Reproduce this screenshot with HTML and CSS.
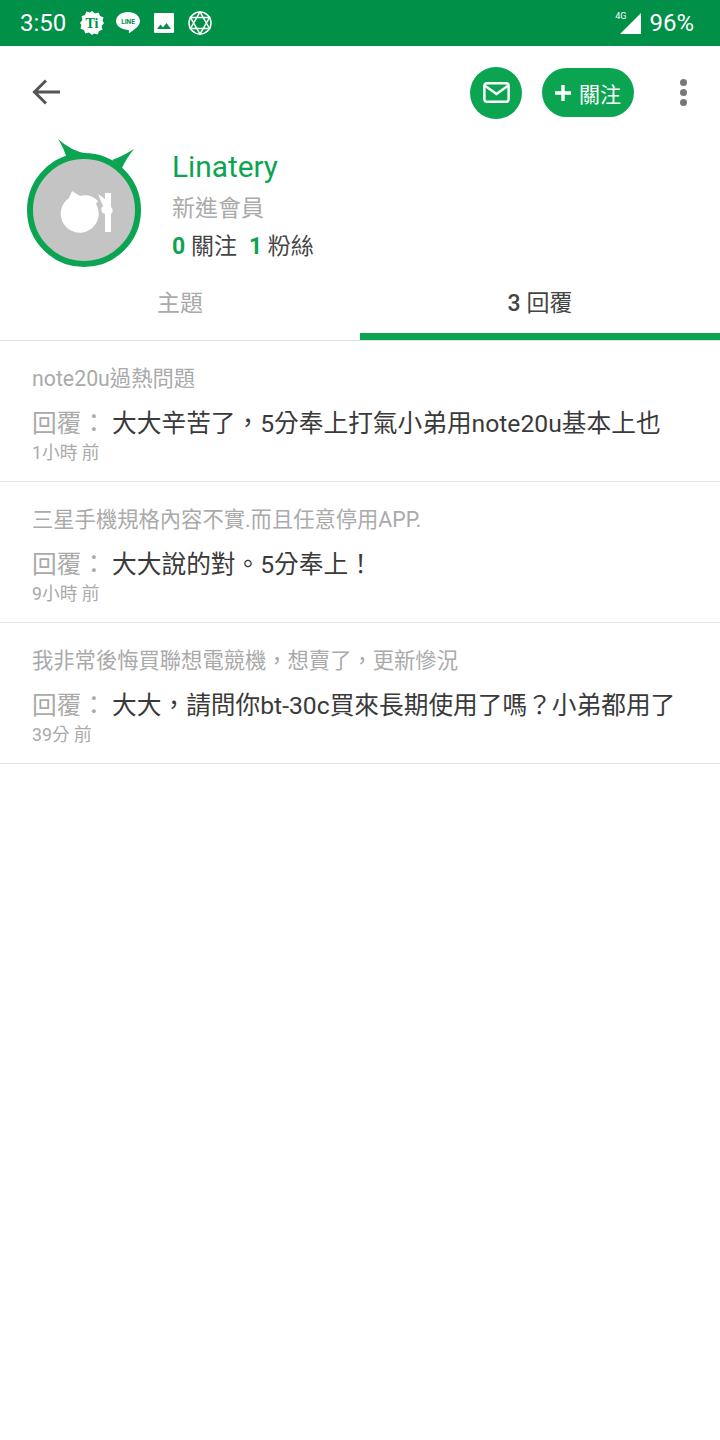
FILE: index.html
```html
<!DOCTYPE html>
<html lang="zh-Hant">
<head>
  <meta charset="UTF-8">
  <title>Linatery</title>
  <link rel="stylesheet" href="styles.css">
</head>
<body>
<div class="status-bar">
  <span class="clock">3:50</span>
  <svg class="st-icon" viewBox="0 0 26 26" width="26" height="26"><path fill="#fff" d="M13 1l3 2.400 3.700-.9 1.300 3.500 3.500 1.300-.9 3.700L25 13l-2.400 3 .9 3.700-3.500 1.300-1.300 3.500-3.700-.9L13 25l-3-2.400-3.700.9L5 20 1.500 18.700l.9-3.700L1 13l2.400-3-.9-3.700L6 5l1.300-3.500 3.700.9z"/><text x="13" y="18" class="ti">Ti</text></svg>
  <svg class="st-icon" viewBox="0 0 26 26" width="26" height="26"><path fill="#fff" d="M13 2c6.600 0 12 3.900 12 9 0 5-5.500 8.300-9.500 11.300-1 .7-1.700 1.200-1.700.2l.1-2.500C7.500 20 1 16.500 1 11c0-5.100 5.400-9 12-9z"/><text x="13" y="14" class="line">LINE</text></svg>
  <svg class="st-icon" viewBox="-3 -3 26 26" width="26" height="26"><path fill="#fff" d="M1 0h18a1 1 0 0 1 1 1v18a1 1 0 0 1-1 1H1a1 1 0 0 1-1-1V1a1 1 0 0 1 1-1zm2 16h14l-4.500-6-3.500 4.500-2.500-3z" fill-rule="evenodd"/></svg>
  <svg class="st-icon" viewBox="0 0 26 26" width="26" height="26"><g fill="none" stroke="#fff" stroke-width="1.500"><circle cx="13" cy="13" r="11"/><path d="M13 2l9.500 16.500h-19zM13 24L3.500 7.500h19z"/></g></svg>
  <span class="st-spacer"></span>
  <span class="net">4G</span>
  <svg class="signal" viewBox="0 0 21 21" width="21" height="21"><path fill="#fff" d="M21 0v21H0z"/></svg>
  <span class="battery">96%</span>
</div>

<div class="toolbar">
  <svg class="back" viewBox="0 0 28 26" width="28" height="26"><path fill="none" stroke="#555" stroke-width="3" d="M28 13H3M14 1.500L2.500 13 14 24.500"/></svg>
  <span class="tb-spacer"></span>
  <span class="mail-btn">
    <svg viewBox="0 0 28 22" width="27" height="21"><g fill="none" stroke="#fff" stroke-width="2.600"><rect x="1.300" y="1.300" width="25.400" height="19.400" rx="2.500"/><path d="M2 4l12 8.500L26 4"/></g></svg>
  </span>
  <span class="follow-btn">
    <svg class="plus" viewBox="0 0 16 16" width="16" height="16"><path fill="none" stroke="#fff" stroke-width="3.400" d="M8 0v16M0 8h16"/></svg>
    關注
  </span>
  <span class="more"><i></i><i></i><i></i></span>
</div>

<div class="profile">
  <svg class="avatar" viewBox="0 0 116 130" width="116" height="130">
    <path fill="#0ba552" d="M31 0q13 12 30 15L40 21q-2-10-9-21zM107 10q-13 8-22 11l10 8q4-9 12-19z"/>
    <circle cx="57" cy="71" r="54" fill="#c4c4c4" stroke="#0ba552" stroke-width="6"/>
    <g transform="translate(2 0)">
      <path fill="#fff" d="M43 52l8 5a19 19 0 0 1 18 5l-2 3a19 19 0 1 1-27-6z"/>
      <path fill="#fff" d="M69 55l7 5v-6h6v10 4a4.500 4.500 0 0 1 0 7v18h-6V75a4.500 4.500 0 0 1-2-8z"/>
    </g>
  </svg>
  <div class="info">
    <div class="name">Linatery</div>
    <div class="rank">新進會員</div>
    <div class="counts"><b>0</b> 關注<b class="second">1</b> 粉絲</div>
  </div>
</div>

<div class="tabs">
  <div class="tab">主題</div>
  <div class="tab active"><span class="num">3</span> 回覆</div>
</div>

<div class="list">
  <div class="item">
    <div class="title">note20u過熱問題</div>
    <div class="reply"><span class="lead">回覆：</span>大大辛苦了，5分奉上打氣小弟用note20u基本上也</div>
    <div class="time">1小時 前</div>
  </div>
  <div class="item">
    <div class="title">三星手機規格內容不實.而且任意停用APP.</div>
    <div class="reply"><span class="lead">回覆：</span>大大說的對。5分奉上！</div>
    <div class="time">9小時 前</div>
  </div>
  <div class="item">
    <div class="title">我非常後悔買聯想電競機，想賣了，更新慘況</div>
    <div class="reply"><span class="lead">回覆：</span>大大，請問你bt-30c買來長期使用了嗎？小弟都用了</div>
    <div class="time">39分 前</div>
  </div>
</div>
</body>
</html>
```

FILE: styles.css
```css
* {
  box-sizing: border-box;
}
body {
  margin: 0;
  background: #fff;
  font-family: Roboto, "Noto Sans CJK TC", sans-serif;
  color: #333;
}

.status-bar {
  display: flex;
  align-items: center;
  height: 46px;
  padding: 0 26px 0 20px;
  background: #009048;
  color: #fff;
}
.clock {
  font-size: 24px;
  margin-right: 13px;
}
.st-icon {
  margin-right: 10px;
}
.ti {
  font-family: "Liberation Serif", serif;
  font-weight: bold;
  font-size: 14px;
  text-anchor: middle;
  fill: #009048;
}
.line {
  font-size: 6.5px;
  font-weight: bold;
  text-anchor: middle;
  fill: #009048;
}
.st-spacer {
  flex: 1;
}
.net {
  font-size: 9px;
  align-self: flex-start;
  margin-top: 11px;
  margin-right: -6px;
}
.signal {
  margin-right: 8px;
}
.battery {
  font-size: 24px;
}

.toolbar {
  display: flex;
  align-items: center;
  height: 93px;
  padding: 0 33px 0 32px;
}
.back {
  margin-bottom: 2px;
}
.tb-spacer {
  flex: 1;
}
.mail-btn {
  display: flex;
  align-items: center;
  justify-content: center;
  width: 52px;
  height: 52px;
  border-radius: 50%;
  background: #0ba552;
  margin-right: 20px;
}
.follow-btn {
  display: flex;
  align-items: center;
  height: 49px;
  width: 92px;
  padding-left: 13px;
  border-radius: 25px;
  background: #0ba552;
  color: #fff;
  font-size: 21px;
  margin-right: 46px;
}
.plus {
  margin-right: 8px;
}
.more {
  display: flex;
  flex-direction: column;
  gap: 3px;
}
.more i {
  width: 7px;
  height: 7px;
  border-radius: 50%;
  background: #777;
}

.profile {
  display: flex;
  height: 136px;
}
.avatar {
  margin: 0 0 0 27px;
  flex: none;
}
.info {
  margin-left: 29px;
  padding-top: 7px;
}
.name {
  color: #0ba552;
  font-size: 29.800px;
  line-height: 42px;
}
.rank {
  color: #aaa;
  font-size: 23px;
  line-height: 42px;
}
.counts {
  font-size: 23px;
  line-height: 34px;
  color: #444;
}
.counts b {
  color: #0ba552;
  font-weight: bold;
}
.second {
  margin-left: 12px;
}

.tabs {
  display: flex;
  height: 66px;
  border-bottom: 1px solid #ddd;
}
.tab {
  flex: 1;
  text-align: center;
  font-size: 23px;
  line-height: 58px;
  color: #aaa;
}
.tab.active {
  color: #444;
  border-bottom: 7px solid #0ba552;
}
.num {
  font-weight: 500;
}

.item {
  height: 141px;
  padding: 22px 32px 0;
  border-bottom: 1px solid #e4e4e4;
}
.title {
  color: #aaa;
  font-size: 21.300px;
  line-height: 32px;
}
.reply {
  margin-top: 11px;
  font-size: 24.700px;
  line-height: 36px;
  color: #3a3a3a;
  white-space: nowrap;
  overflow: hidden;
}
.lead {
  color: #aaa;
  margin-right: 6px;
}
.time {
  color: #aaa;
  font-size: 17.700px;
  line-height: 22px;
}
```
